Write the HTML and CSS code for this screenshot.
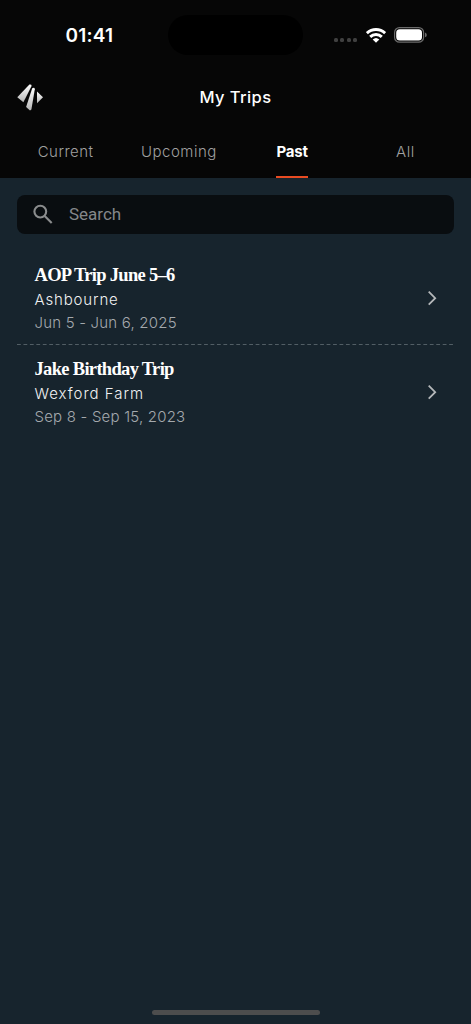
FILE: index.html
```html
<!DOCTYPE html>
<html lang="en">
<head>
<meta charset="utf-8">
<title>My Trips</title>
<link rel="stylesheet" href="styles.css">
</head>
<body>
<div class="screen">
  <header class="header">
    <div class="status">
      <span class="time">01:41</span>
      <span class="island"></span>
      <div class="indicators">
        <span class="cell"><i></i><i></i><i></i><i></i></span>
        <svg class="wifi" viewBox="0 0 20 15" width="20" height="15">
          <g fill="none" stroke="#fff" stroke-width="2.9"><path d="M.9 5.2a13.2 13.2 0 0 1 18.2 0"/><path d="M4.2 8.9a8.3 8.3 0 0 1 11.6 0"/></g>
          <path d="M6.7 11.5a4.8 4.8 0 0 1 6.6 0L10 14.8z" fill="#fff"/>
        </svg>
        <svg class="battery" viewBox="0 0 33 16" width="33" height="16">
          <rect x=".6" y=".6" width="29" height="14.6" rx="4.8" fill="none" stroke="#6b6b6b" stroke-width="1.2"/>
          <rect x="2.2" y="2.2" width="25.8" height="11.4" rx="3.5" fill="#fff"/>
          <path d="M31 5.5q1.8.7 1.8 2.4T31 10.3z" fill="#6b6b6b"/>
        </svg>
      </div>
    </div>
    <div class="titlebar">
      <svg class="logo" viewBox="0 0 26 27" width="26" height="27">
        <defs><linearGradient id="silver" x1="0" y1="0" x2="0" y2="1"><stop offset="0" stop-color="#fff"/><stop offset="1" stop-color="#b4b4b4"/></linearGradient></defs>
        <g fill="url(#silver)"><path d="M12.4.6Q14.6.2 14.6 2L6.4 18.2.3 13.2Z"/><path d="M15.2 4.2Q17.8 3.2 17.8 5.2L14.4 25.4 13 26.6 9.1 23Z"/><path d="M20 7.4 26 13.3 20 19.2Z"/></g>
      </svg>
      <h1 class="title"><span>My Trips</span></h1>
    </div>
    <nav class="tabs">
      <a class="tab"><span>Current</span></a>
      <a class="tab"><span>Upcoming</span></a>
      <a class="tab active"><span>Past</span></a>
      <a class="tab"><span>All</span></a>
    </nav>
  </header>
  <main class="content">
    <div class="search">
      <svg viewBox="0 0 20 20" width="20" height="20" fill="none" stroke="#8a8c8d" stroke-width="2.1"><circle cx="7.3" cy="7.6" r="5.9"/><path d="m11.7 12 7 7"/></svg>
      <span>Search</span>
    </div>
    <section class="trip">
      <div class="info">
        <h2 class="name">AOP Trip June 5–6</h2>
        <p class="place">Ashbourne</p>
        <p class="date">Jun 5 - Jun 6, 2025</p>
      </div>
      <svg class="chevron" viewBox="0 0 10 16" width="10" height="16"><path d="m1.7 1.7 6.5 6.5-6.5 6.5"/></svg>
    </section>
    <svg class="divider" width="437" height="1"><path d="M0 .5H437"/></svg>
    <section class="trip">
      <div class="info">
        <h2 class="name jake">Jake Birthday Trip</h2>
        <p class="place wexford">Wexford Farm</p>
        <p class="date">Sep 8 - Sep 15, 2023</p>
      </div>
      <svg class="chevron" viewBox="0 0 10 16" width="10" height="16"><path d="m1.7 1.7 6.5 6.5-6.5 6.5"/></svg>
    </section>
  </main>
  <div class="home"></div>
</div>
</body>
</html>
```

FILE: styles.css
```css
* { box-sizing: border-box; }
body { margin: 0; background: #17242d; }
h1, h2, p { margin: 0; }
svg { display: block; flex: none; }
.screen { width: 471px; height: 1024px; display: flex; flex-direction: column; background: #17242d; font-family: Inter, "Liberation Sans", sans-serif; color: #fff; overflow: hidden; }
.header { height: 178px; background: #060606; flex: none; }
.status { height: 70px; display: grid; grid-template-columns: 168px 135px 1fr; align-items: center; }
.time { padding: 2px 0 0 65.5px; font-size: 19px; font-weight: 600; letter-spacing: .2px; line-height: 24px; }
.island { height: 40px; border-radius: 20px; background: #000; }
.indicators { display: flex; align-items: center; padding-left: 31px; }
.cell { display: flex; gap: 2.4px; padding-top: 10px; width: 32px; }
.cell i { width: 4px; height: 4px; border-radius: 1.5px; background: #404040; }
.wifi { margin-left: -.5px; }
.battery { margin-left: 8px; }
.titlebar { height: 54px; display: grid; grid-template-columns: 26px 1fr 26px; align-items: center; padding: 0 17px; }
.title { text-align: center; font-size: 16.5px; font-weight: 500; letter-spacing: .4px; line-height: 24px; }
.tabs { height: 54px; display: grid; grid-template-columns: repeat(4, 1fr); padding: 0 9px; }
.tab { display: flex; justify-content: center; color: #a0a0a0; font-size: 15px; font-weight: 300; letter-spacing: .5px; }
.tab span { height: 54px; line-height: 55px; }
.tab.active { color: #fff; font-weight: 700; letter-spacing: -.2px; }
.tab.active span { border-bottom: 2px solid #e84b22; }
.content { flex: 1; padding: 17px 17px 0; }
.search { height: 39px; display: flex; align-items: center; gap: 16px; padding: 0 0 1px 16px; border-radius: 8px; background: #090d10; color: #84878a; font: 17px Roboto, sans-serif; }
.trip { height: 93px; display: flex; align-items: center; justify-content: space-between; padding: 0 17px 0 17.5px; }
.search + .trip { height: 110px; padding-top: 17px; }
.name { font-family: "Liberation Serif", serif; font-size: 18.5px; line-height: 25px; font-weight: 700; letter-spacing: -.7px; white-space: nowrap; }
.name.jake { letter-spacing: -.68px; }
.place { font-size: 15px; line-height: 24px; color: #f0f1f2; letter-spacing: .85px; font-weight: 300; }
.place.wexford { letter-spacing: .98px; }
.date { font-size: 15px; line-height: 21px; color: #a4a9ad; letter-spacing: .2px; font-weight: 300; white-space: nowrap; }
.chevron { fill: none; stroke: #b5b8ba; stroke-width: 1.8; }
.divider { stroke: #525e65; stroke-width: 1; stroke-dasharray: 3.8 2.65; }
.home { width: 168px; height: 5px; margin: 0 auto 9px; border-radius: 3px; background: #4d4d4d; flex: none; }
```
